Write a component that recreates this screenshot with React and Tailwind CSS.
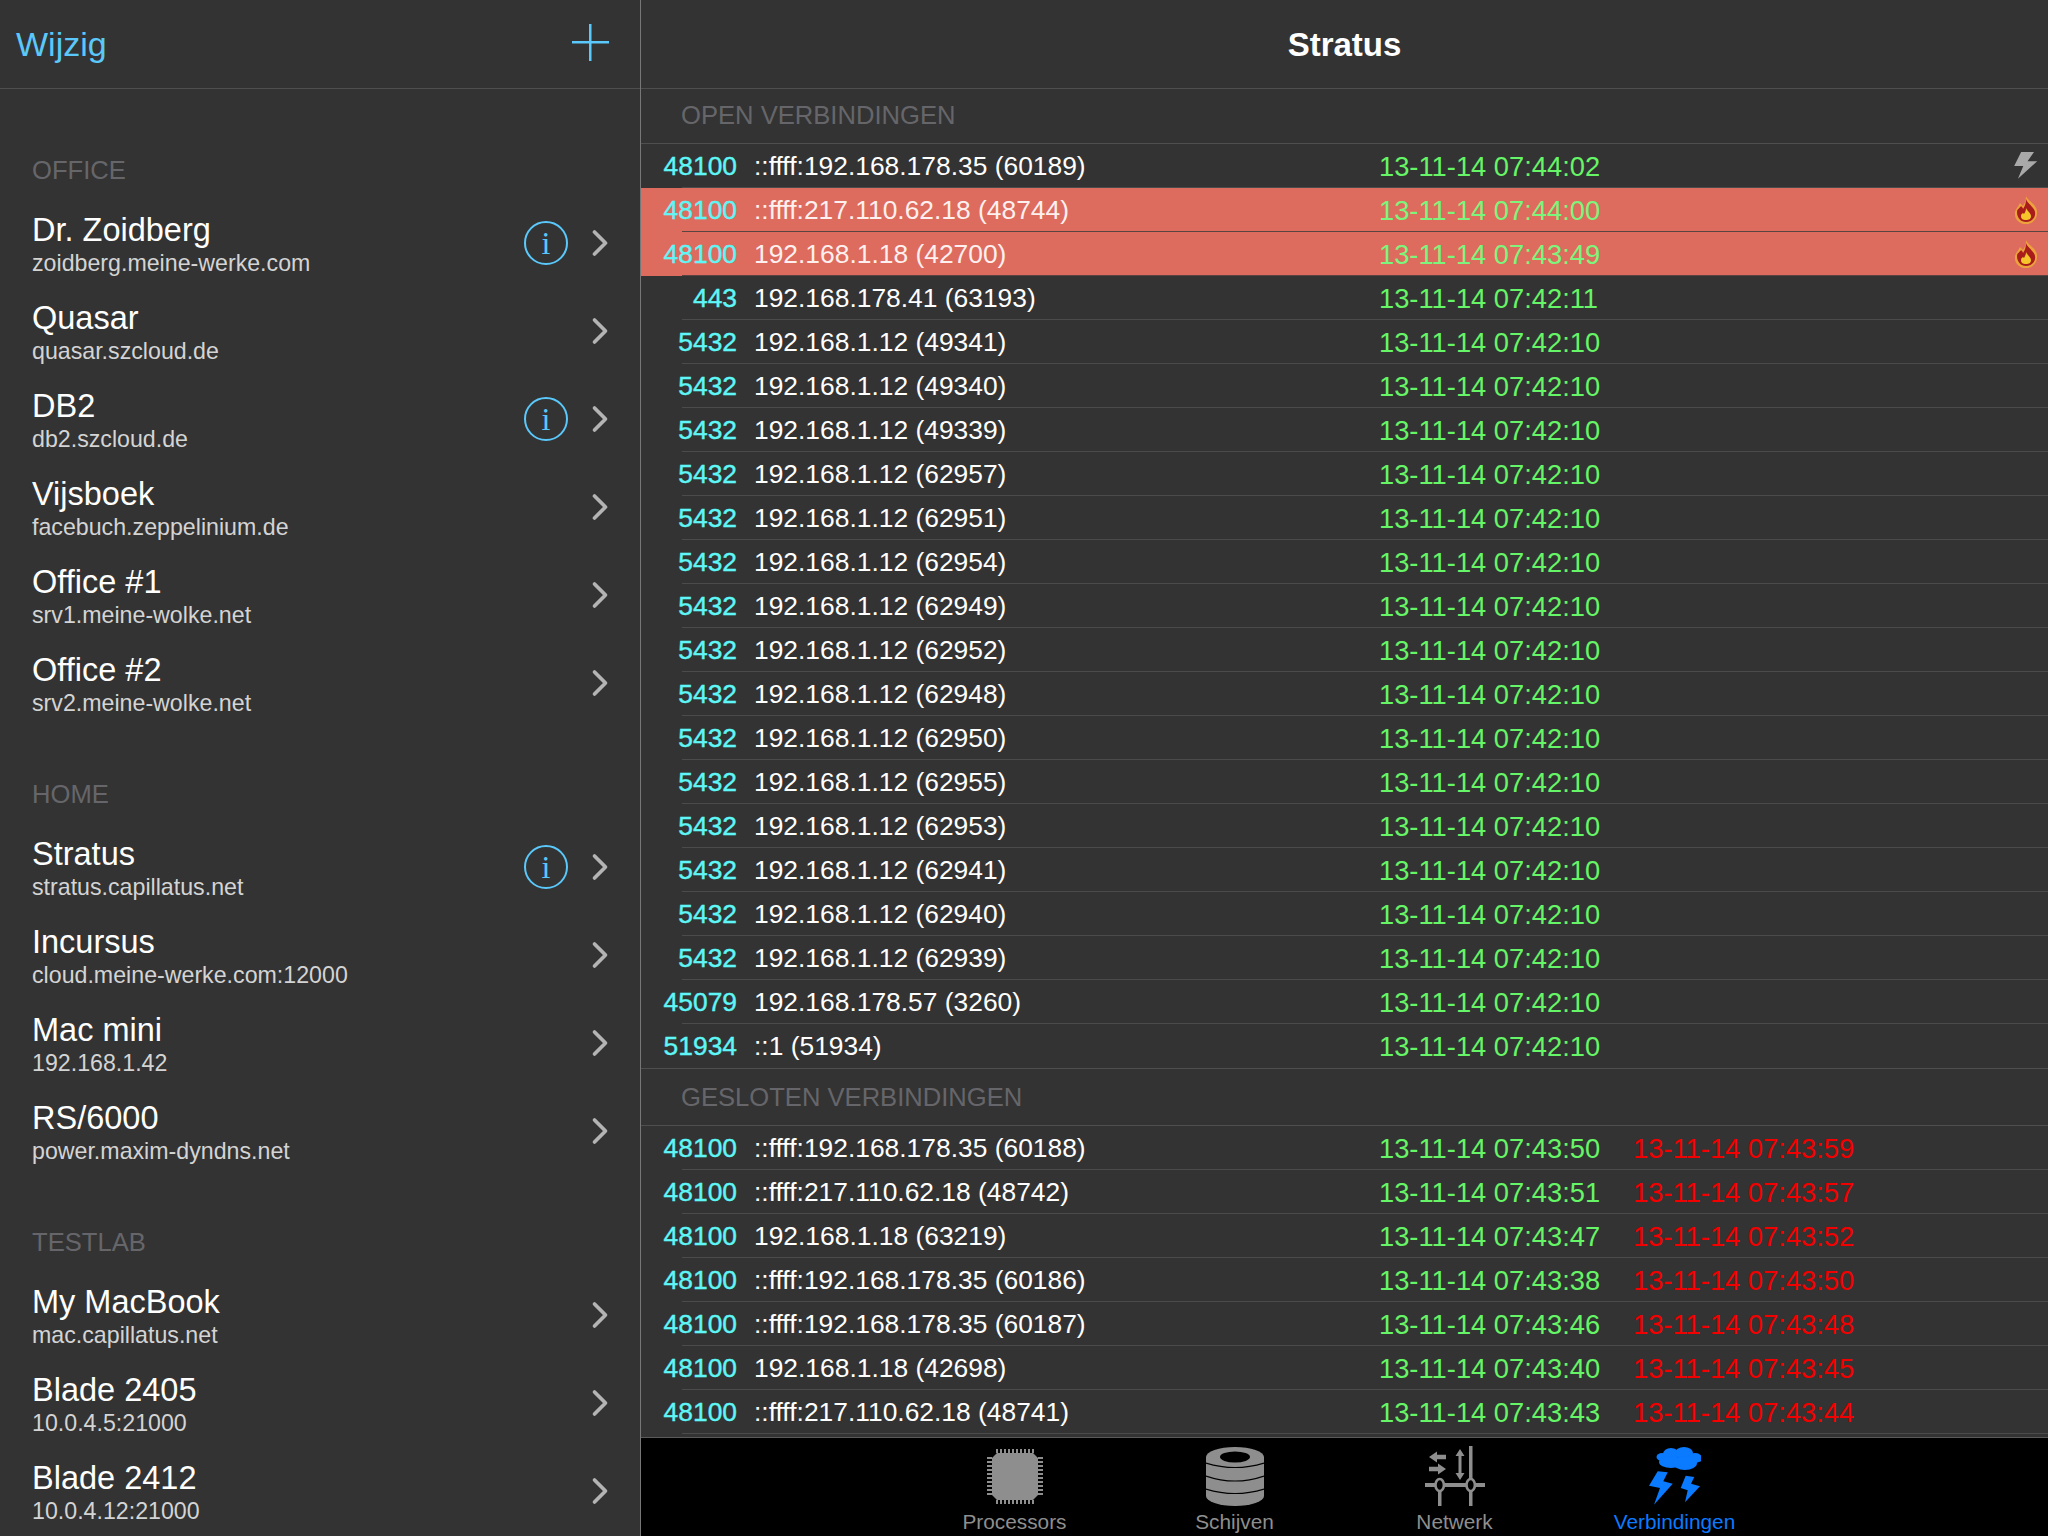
import { ChevronRight } from 'lucide-react'

const SERVERS = [
  {
    title: 'OFFICE',
    items: [
      { name: 'Dr. Zoidberg', host: 'zoidberg.meine-werke.com', info: true },
      { name: 'Quasar', host: 'quasar.szcloud.de' },
      { name: 'DB2', host: 'db2.szcloud.de', info: true },
      { name: 'Vijsboek', host: 'facebuch.zeppelinium.de' },
      { name: 'Office #1', host: 'srv1.meine-wolke.net' },
      { name: 'Office #2', host: 'srv2.meine-wolke.net' },
    ],
  },
  {
    title: 'HOME',
    items: [
      { name: 'Stratus', host: 'stratus.capillatus.net', info: true },
      { name: 'Incursus', host: 'cloud.meine-werke.com:12000' },
      { name: 'Mac mini', host: '192.168.1.42' },
      { name: 'RS/6000', host: 'power.maxim-dyndns.net' },
    ],
  },
  {
    title: 'TESTLAB',
    items: [
      { name: 'My MacBook', host: 'mac.capillatus.net' },
      { name: 'Blade 2405', host: '10.0.4.5:21000' },
      { name: 'Blade 2412', host: '10.0.4.12:21000' },
    ],
  },
]

const OPEN = [
  ['48100', '::ffff:192.168.178.35 (60189)', '13-11-14 07:44:02', 'bolt'],
  ['48100', '::ffff:217.110.62.18 (48744)', '13-11-14 07:44:00', 'fire'],
  ['48100', '192.168.1.18 (42700)', '13-11-14 07:43:49', 'fire'],
  ['443', '192.168.178.41 (63193)', '13-11-14 07:42:11'],
  ['5432', '192.168.1.12 (49341)', '13-11-14 07:42:10'],
  ['5432', '192.168.1.12 (49340)', '13-11-14 07:42:10'],
  ['5432', '192.168.1.12 (49339)', '13-11-14 07:42:10'],
  ['5432', '192.168.1.12 (62957)', '13-11-14 07:42:10'],
  ['5432', '192.168.1.12 (62951)', '13-11-14 07:42:10'],
  ['5432', '192.168.1.12 (62954)', '13-11-14 07:42:10'],
  ['5432', '192.168.1.12 (62949)', '13-11-14 07:42:10'],
  ['5432', '192.168.1.12 (62952)', '13-11-14 07:42:10'],
  ['5432', '192.168.1.12 (62948)', '13-11-14 07:42:10'],
  ['5432', '192.168.1.12 (62950)', '13-11-14 07:42:10'],
  ['5432', '192.168.1.12 (62955)', '13-11-14 07:42:10'],
  ['5432', '192.168.1.12 (62953)', '13-11-14 07:42:10'],
  ['5432', '192.168.1.12 (62941)', '13-11-14 07:42:10'],
  ['5432', '192.168.1.12 (62940)', '13-11-14 07:42:10'],
  ['5432', '192.168.1.12 (62939)', '13-11-14 07:42:10'],
  ['45079', '192.168.178.57 (3260)', '13-11-14 07:42:10'],
  ['51934', '::1 (51934)', '13-11-14 07:42:10'],
]

const CLOSED = [
  ['48100', '::ffff:192.168.178.35 (60188)', '13-11-14 07:43:50', '13-11-14 07:43:59'],
  ['48100', '::ffff:217.110.62.18 (48742)', '13-11-14 07:43:51', '13-11-14 07:43:57'],
  ['48100', '192.168.1.18 (63219)', '13-11-14 07:43:47', '13-11-14 07:43:52'],
  ['48100', '::ffff:192.168.178.35 (60186)', '13-11-14 07:43:38', '13-11-14 07:43:50'],
  ['48100', '::ffff:192.168.178.35 (60187)', '13-11-14 07:43:46', '13-11-14 07:43:48'],
  ['48100', '192.168.1.18 (42698)', '13-11-14 07:43:40', '13-11-14 07:43:45'],
  ['48100', '::ffff:217.110.62.18 (48741)', '13-11-14 07:43:43', '13-11-14 07:43:44'],
]

function PlusIcon() {
  return (
    <svg width="37" height="37" viewBox="0 0 37 37" fill="#5ac8fa">
      <rect x="17" y="0" width="2.5" height="37" />
      <rect x="0" y="17" width="37" height="2.5" />
    </svg>
  )
}

function BoltIcon() {
  return (
    <svg width="27" height="30" viewBox="0 0 24 28" className="blur-[0.6px]">
      <path d="M7 1h12l-6 8.5h9L4 26l5-12H.5z" fill="#a9a9a9" />
    </svg>
  )
}

function FireIcon() {
  return (
    <svg width="26" height="28" viewBox="0 0 24 28">
      <path d="M12 0c1 4 10 8 11 15 1 8-5 13-11 13S0 24 1 16c1-4 4-6 5-9 1 1 2 2 3 3 2-3 3-6 3-10z" fill="#eda33c" />
      <path d="M12 3c1 4 8 8 9 13 1 6-4 10-9 10S3 22 3 16c0-3 3-4 4-6 1 1 2 2 2 3 2-3 3-6 3-10z" fill="#a81c1c" />
      <path d="M12 12c1 3 5 5 5 8s-2 4-5 4-5-1-5-4c0-2 1-2 2-3l1 1c1-2 2-3 2-6z" fill="#f5c52a" />
    </svg>
  )
}

function ChipIcon() {
  const pins = [0, 1, 2, 3, 4, 5, 6, 7, 8, 9]
  return (
    <svg width="56" height="55" viewBox="0 0 56 55" fill="#8e8e8e">
      <path d="M10 4h36l5 5v37l-5 5H10l-5-5V9z" />
      {pins.map((i) => (
        <g key={i}>
          <rect x={9 + i * 4} y="0" width="2" height="4" />
          <rect x={9 + i * 4} y="51" width="2" height="4" />
          <rect x="0" y={8 + i * 4} width="5" height="2" />
          <rect x="51" y={8 + i * 4} width="5" height="2" />
        </g>
      ))}
    </svg>
  )
}

function DiskIcon() {
  return (
    <svg width="58" height="59" viewBox="0 0 58 59">
      <path d="M0 10A29 10 0 0 1 58 10V49A29 10 0 0 1 0 49z" fill="#8e8e8e" />
      <ellipse cx="29" cy="10" rx="15" ry="5.5" fill="#000" />
      <path d="M0 16Q29 25 58 16M0 29Q29 39 58 29M0 42Q29 51 58 42" fill="none" stroke="#000" strokeWidth="1.2" />
    </svg>
  )
}

function NetworkIcon() {
  return (
    <svg width="60" height="60" viewBox="0 0 60 60" fill="#8e8e8e">
      <rect x="44" y="0" width="3.5" height="33" />
      <rect x="44" y="45" width="3.5" height="15" />
      <rect x="13" y="45" width="3.5" height="15" />
      <rect x="0" y="37" width="60" height="4" />
      <ellipse cx="14.7" cy="39" rx="4.2" ry="6" fill="#000" stroke="#8e8e8e" strokeWidth="2.6" />
      <ellipse cx="45.7" cy="39" rx="4.2" ry="6" fill="#000" stroke="#8e8e8e" strokeWidth="2.6" />
      <path d="M35 3l4.5 7h-3v17h3L35 34l-4.5-7h3V10h-3z" />
      <path d="M4 11l8-5.5v3.3h9v4.4h-9V16.5z" />
      <path d="M21 23l-8-5.5v3.3H4v4.4h9v3.3z" />
    </svg>
  )
}

function StormIcon() {
  return (
    <svg width="52" height="58" viewBox="0 0 52 58" fill="#0a7aff">
      <ellipse cx="13" cy="10" rx="5.5" ry="4" />
      <ellipse cx="22" cy="7" rx="8" ry="6" />
      <ellipse cx="35" cy="6" rx="9" ry="6" />
      <ellipse cx="46" cy="11" rx="7" ry="5" />
      <ellipse cx="51" cy="13" rx="2" ry="1.5" />
      <ellipse cx="22" cy="15" rx="12" ry="6" />
      <ellipse cx="36" cy="16" rx="12" ry="7" />
      <path d="M8.7 24.3l10 1-4.4 9 9.4 2.4L5 57.7 11 41 0 38.7z" />
      <path d="M36.7 28.7l8.6 1.3-3.3 6.7 9 2.6L36 55.3l2.7-12-7-2.3z" />
    </svg>
  )
}

const TABS = [
  { label: 'Processors', Icon: ChipIcon },
  { label: 'Schijven', Icon: DiskIcon },
  { label: 'Netwerk', Icon: NetworkIcon },
  { label: 'Verbindingen', Icon: StormIcon, active: true },
]

function InfoButton() {
  return (
    <div className="w-[44px] h-[44px] mt-[2px] rounded-full border-2 border-[#5ac8fa] flex items-center justify-center text-[#5ac8fa] text-[32px] leading-none font-['Liberation_Serif',serif]">
      i
    </div>
  )
}

function ServerRow({ item }) {
  return (
    <div className="h-[88px] pl-[32px] pr-[28px] flex items-center">
      <div className="flex-1 min-w-0 mt-[3px]">
        <div className="text-[32.5px] leading-[38px] text-white">{item.name}</div>
        <div className="text-[23.2px] leading-[28px] text-[#d4d4d4]">{item.host}</div>
      </div>
      {item.info && <InfoButton />}
      <ChevronRight size={44} strokeWidth={2} className="text-[#b4b4b4] mt-[1px] ml-[10px] -mr-[10px]" />
    </div>
  )
}

function ConnectionRow({ port, peer, start, end, alert, icon, last }) {
  return (
    <div className={`relative h-[44px] pt-[2px] flex items-center ${alert ? 'bg-[#dd6b5e]' : ''}`}>
      <span className="w-[96px] text-right text-[26.4px] text-[#5ef6f6] [-webkit-text-stroke:0.4px_#5ef6f6]">{port}</span>
      <span className={`ml-[17px] w-[625px] text-[26.4px] ${alert ? 'text-[#fdf0ee]' : 'text-white'}`}>{peer}</span>
      <span className={`w-[254px] text-[27.3px] ${alert ? 'text-[#7cf57c]' : 'text-[#66f566]'}`}>{start}</span>
      {end && <span className="text-[27.3px] text-[#f20000]">{end}</span>}
      {icon && (
        <span className="absolute right-[7px] top-[7px] w-[30px] h-[30px] flex items-center justify-center">
          {icon === 'bolt' ? <BoltIcon /> : <FireIcon />}
        </span>
      )}
      {!last && (
        <div className={`absolute bottom-0 left-[41px] right-0 h-px ${alert ? 'bg-[#5a4340]' : 'bg-[#4b4b4b]'}`} />
      )}
    </div>
  )
}

export default function App() {
  return (
    <div className="w-[2048px] h-[1536px] overflow-hidden bg-[#333333] flex font-['Liberation_Sans',Arial,sans-serif]">
      {/* Server list */}
      <aside className="w-[641px] h-full shrink-0 border-r border-[#777777] overflow-hidden">
        <div className="h-[89px] border-b border-[#4f4f4f] pl-[16px] pr-[31px] flex items-center justify-between">
          <span className="text-[34px] text-[#5ac8fa]">Wijzig</span>
          <div className="-mt-[4px]"><PlusIcon /></div>
        </div>
        {SERVERS.map((section, i) => (
          <div key={section.title}>
            <div className={`${i === 0 ? 'h-[109px]' : 'h-[96px]'} pl-[32px] pb-[13px] flex items-end text-[25.6px] leading-[30px] text-[#66666a]`}>
              {section.title}
            </div>
            {section.items.map((item) => (
              <ServerRow key={item.name} item={item} />
            ))}
          </div>
        ))}
      </aside>

      {/* Connections */}
      <main className="flex-1 h-full flex flex-col min-w-0">
        <div className="h-[89px] shrink-0 pt-[2px] border-b border-[#4f4f4f] flex items-center justify-center text-[33px] font-bold text-white">
          Stratus
        </div>
        <div className="flex-1 min-h-0 overflow-hidden">
          <div className="h-[55px] border-b border-[#4f4f4f] pl-[40px] pb-[2px] flex items-center text-[25.6px] text-[#66666a]">OPEN VERBINDINGEN</div>
          {OPEN.map((row, i) => (
            <ConnectionRow
              key={i}
              port={row[0]}
              peer={row[1]}
              start={row[2]}
              icon={row[3]}
              alert={row[3] === 'fire'}
              last={i === OPEN.length - 1}
            />
          ))}
          <div className="h-[58px] border-y border-[#4f4f4f] pl-[40px] flex items-center text-[25.6px] text-[#66666a]">GESLOTEN VERBINDINGEN</div>
          {CLOSED.map((row, i) => (
            <ConnectionRow key={i} port={row[0]} peer={row[1]} start={row[2]} end={row[3]} />
          ))}
        </div>
        <div className="h-[99px] shrink-0 bg-black border-t border-[#5a5a5a] flex justify-center pt-[8px]">
          {TABS.map(({ label, Icon, active }) => (
            <div key={label} className="w-[220px] flex flex-col items-center">
              <div className="h-[60px] mb-[4px] flex items-center justify-center"><Icon /></div>
              <span className={`text-[20.8px] leading-[24px] ${active ? 'text-[#0a7aff]' : 'text-[#8e8e8e]'}`}>{label}</span>
            </div>
          ))}
        </div>
      </main>
    </div>
  )
}
